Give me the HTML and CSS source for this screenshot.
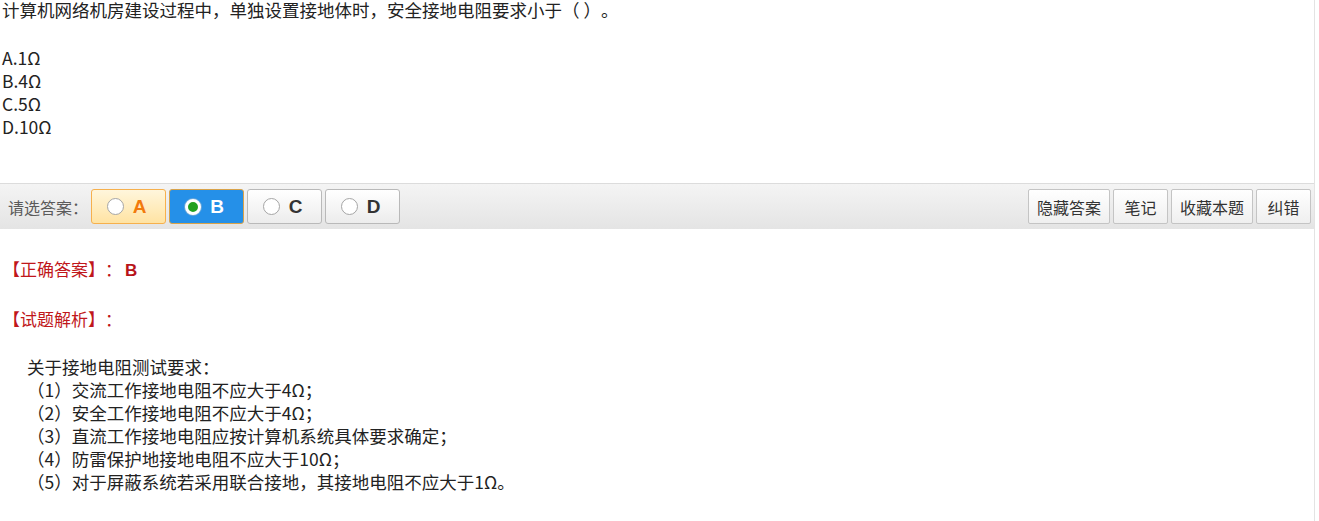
FILE: index.html
```html
<!DOCTYPE html>
<html lang="zh-CN">
<head>
  <meta charset="UTF-8" />
  <title>试题</title>
  <link rel="stylesheet" href="styles.css">
</head>
<body>
  <div class="page">
    <!-- 题干 -->
    <div class="question">
      <p class="title">计算机网络机房建设过程中，单独设置接地体时，安全接地电阻要求小于（ ）。</p>
      <ul class="options">
        <li>A.1Ω</li>
        <li>B.4Ω</li>
        <li>C.5Ω</li>
        <li>D.10Ω</li>
      </ul>
    </div>

    <!-- 选项条 -->
    <div class="toolbar">
      <span class="label">请选答案：</span>
      <div class="choices">
        <button class="choice choice-a"><i class="radio"></i>A</button>
        <button class="choice choice-b"><i class="radio checked"></i>B</button>
        <button class="choice"><i class="radio"></i>C</button>
        <button class="choice"><i class="radio"></i>D</button>
      </div>
      <div class="actions">
        <button class="btn">隐藏答案</button>
        <button class="btn">笔记</button>
        <button class="btn">收藏本题</button>
        <button class="btn">纠错</button>
      </div>
    </div>

    <!-- 答案 -->
    <div class="answer">
      <p class="answer-row"><span class="tag">【正确答案】：</span><b class="right">B</b></p>
      <p class="answer-row analysis-title"><span class="tag">【试题解析】：</span></p>
      <div class="analysis">
        <p class="lead">关于接地电阻测试要求：</p>
        <p>（1）交流工作接地电阻不应大于4Ω；</p>
        <p>（2）安全工作接地电阻不应大于4Ω；</p>
        <p>（3）直流工作接地电阻应按计算机系统具体要求确定；</p>
        <p>（4）防雷保护地接地电阻不应大于10Ω；</p>
        <p>（5）对于屏蔽系统若采用联合接地，其接地电阻不应大于1Ω。</p>
      </div>
    </div>
  </div>
</body>
</html>
```

FILE: styles.css
```css
* {
  box-sizing: border-box;
  margin: 0;
  padding: 0;
}

body {
  font-family: 'Noto Sans CJK SC', 'Noto Sans', sans-serif;
  font-size: 17.5px;
  color: #222;
  background: #fff;
  text-spacing-trim: space-all;
}

.page {
  width: 1315px;
  min-height: 521px;
  border-right: 1px solid #e3e3e3;
  overflow: hidden;
}

/* Question */
.question {
  padding: 0 2px;
  line-height: 23px;
  height: 183px;
}

.title {
  line-height: 20px;
}

.options {
  list-style: none;
  margin-top: 26px;
}

/* Toolbar */
.toolbar {
  height: 46px;
  display: flex;
  align-items: center;
  border-top: 1px solid #dcdcdc;
  background: linear-gradient(#f4f4f4 0%, #e4e4e4 100%);
  padding: 0 3px 0 8px;
}

.label {
  color: #5a5a5a;
  font-size: 16px;
  width: 83px;
}

.choices {
  display: flex;
  gap: 3px;
}

.choice {
  width: 75px;
  height: 35px;
  border: 1px solid #b9b9b9;
  border-radius: 3px;
  background: linear-gradient(#ffffff 0%, #ececec 100%);
  display: flex;
  align-items: center;
  justify-content: center;
  gap: 9px;
  font-family: 'Liberation Sans', Arial, sans-serif;
  font-weight: bold;
  font-size: 19px;
  color: #333;
  padding-right: 4px;
}

.choice-a {
  background: linear-gradient(#fff6dc 0%, #ffe3a3 100%);
  border-color: #f6b04d;
  color: #f27a0c;
}

.choice-b {
  background: #2590e8;
  border-color: #d9a34a;
  color: #fff;
}

.radio {
  width: 17px;
  height: 17px;
  border-radius: 50%;
  border: 1px solid #a5a5a5;
  background: #fff;
  display: inline-block;
}

.radio.checked {
  border: 3px solid #fff;
  background: #22a120;
  box-shadow: 0 0 0 1px #6aa6d8;
  width: 16px;
  height: 16px;
}

.actions {
  margin-left: auto;
  display: flex;
  gap: 3px;
}

.btn {
  height: 35px;
  min-width: 55px;
  padding: 0 8px;
  border: 1px solid #c4c4c4;
  border-radius: 2px;
  background: linear-gradient(#ffffff 0%, #efefef 100%);
  font-family: 'Noto Sans CJK SC', sans-serif;
  font-size: 16px;
  color: #333;
  cursor: pointer;
}

/* Answer */
.answer {
  padding: 0 3px;
}

.answer-row {
  height: 23px;
  line-height: 23px;
  margin-top: 28px;
}

.analysis-title {
  margin-top: 27px;
}

.tag {
  color: #c0171b;
  font-size: 17px;
}

.right {
  color: #b8141a;
  font-family: 'Liberation Sans', Arial, sans-serif;
  font-size: 17px;
  margin-left: 3px;
}

.analysis {
  margin-top: 25px;
  padding-left: 24px;
  line-height: 23px;
}
```
